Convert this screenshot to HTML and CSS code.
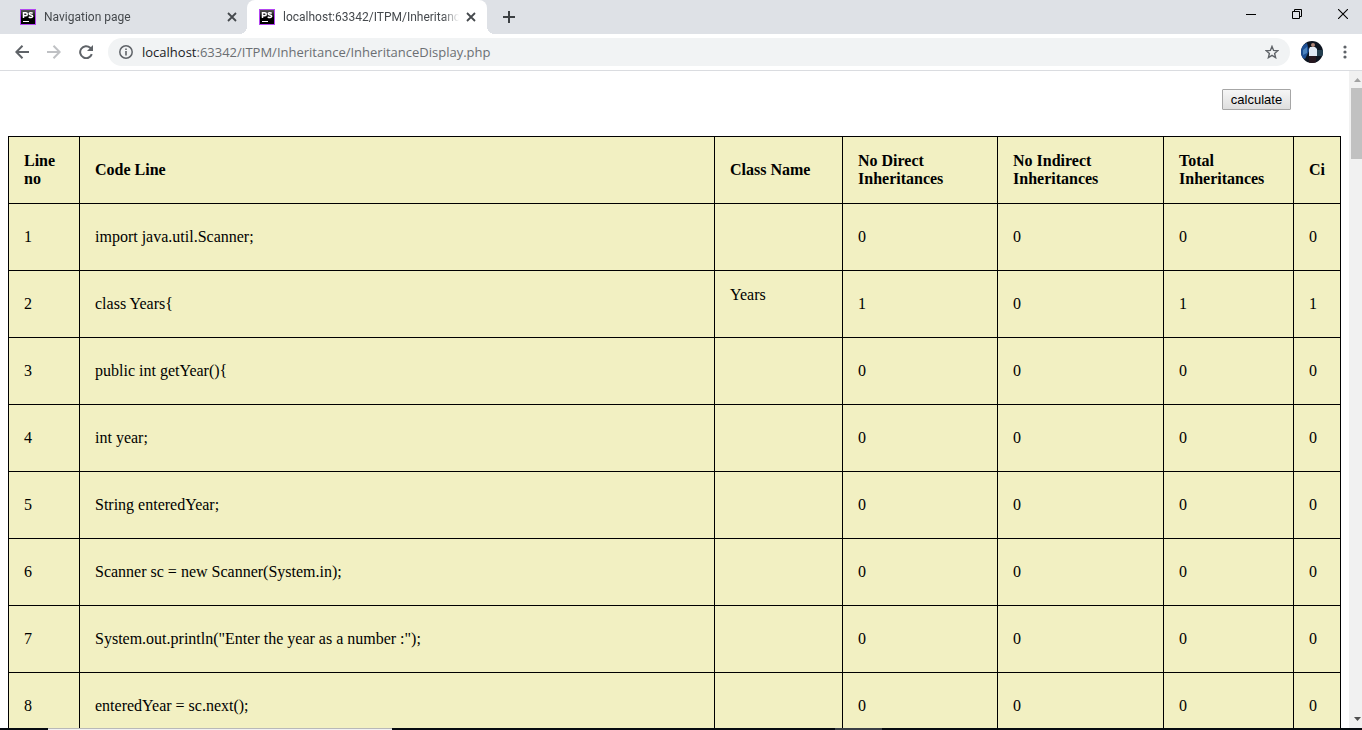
FILE: index.html
```html
<!DOCTYPE html>
<html lang="en">
<head>
<meta charset="utf-8">
<title>Inheritance Display</title>
<link rel="stylesheet" href="styles.css">
</head>
<body>
<svg class="defs" aria-hidden="true">
  <defs>
    <linearGradient id="psg" x1="0" y1="0" x2="0" y2="1"><stop offset="0" stop-color="#555"/><stop offset=".55" stop-color="#000"/></linearGradient>
    <symbol id="ps" viewBox="0 0 16 16">
      <rect width="16" height="16" fill="#b345f1"/>
      <rect x="1" y="1" width="14" height="14" fill="url(#psg)"/>
      <path d="M3.500 9V3.700h2.200a1.500 1.500 0 0 1 0 3.100H3.500M12.700 4.300C11.500 3.300 9.200 3.400 9.200 4.800c0 1.600 3.500.9 3.500 2.500 0 1.500-2.600 1.500-4 .5" fill="none" stroke="#fff" stroke-width="1.500"/>
      <path d="M3 12h6v1H3z" fill="#fff"/>
    </symbol>
    <symbol id="x" viewBox="0 0 10 10"><path d="M1 1l8 8M9 1l-8 8" stroke="#45494d" stroke-width="1.800"/></symbol>
  </defs>
</svg>
<header class="tabs">
  <div class="tab">
    <svg class="favicon"><use href="#ps"/></svg>
    <span class="tab-title">Navigation page</span>
    <button class="icon tab-close" aria-label="Close tab"><svg width="10" height="10"><use href="#x"/></svg></button>
  </div>
  <div class="tab tab-active">
    <svg class="favicon"><use href="#ps"/></svg>
    <span class="tab-title">localhost:63342/ITPM/Inheritance</span>
    <button class="icon tab-close" aria-label="Close tab"><svg width="10" height="10"><use href="#x"/></svg></button>
  </div>
  <button class="icon new-tab" aria-label="New tab"><svg width="12" height="12"><path d="M6 0v12M0 6h12" stroke="#3c4043" stroke-width="2"/></svg></button>
  <div class="window-controls">
    <button class="icon" aria-label="Minimize"><svg width="10" height="10"><path d="M0 5.500h10" stroke="#000"/></svg></button>
    <button class="icon" aria-label="Restore"><svg width="10" height="10"><path d="M.5 2.500h7v7h-7zM2.500 2.500v-2h7v7h-2" fill="none" stroke="#000"/></svg></button>
    <button class="icon" aria-label="Close"><svg width="10" height="10"><path d="M0 0l10 10M10 0L0 10" stroke="#000" stroke-width="1.100"/></svg></button>
  </div>
</header>
<nav class="toolbar">
  <button class="icon nav" aria-label="Back"><svg width="14" height="14"><path d="M14 7H1.500M7.500.8L1.300 7l6.200 6.200" fill="none" stroke="#5f6368" stroke-width="2"/></svg></button>
  <button class="icon nav" aria-label="Forward"><svg width="14" height="14"><path d="M0 7h12.500M6.500.8L12.700 7l-6.200 6.200" fill="none" stroke="#bfc1c4" stroke-width="2"/></svg></button>
  <button class="icon nav" aria-label="Reload"><svg width="14" height="14"><path d="M12.800 9.200A6 6 0 1 1 11.200 2.700L12.500 4" fill="none" stroke="#5f6368" stroke-width="2"/><path d="M14 0v6H8z" fill="#5f6368"/></svg></button>
  <div class="omnibox">
    <svg width="14" height="14"><circle cx="7" cy="7" r="6.200" fill="none" stroke="#5f6368" stroke-width="1.500"/><path d="M6.200 6h1.600v4.500H6.200zM6.200 3.400h1.600V5H6.200z" fill="#5f6368"/></svg>
    <span class="url"><span class="host">localhost</span>:63342/ITPM/Inheritance/InheritanceDisplay.php</span>
    <button class="icon" aria-label="Bookmark"><svg width="14" height="14"><path d="M7 1.400l1.600 4 4.200.3-3.200 2.700 1 4.200L7 10.300l-3.600 2.300 1-4.200L1.200 5.700l4.200-.3z" fill="none" stroke="#5f6368" stroke-width="1.400"/></svg></button>
  </div>
  <button class="icon avatar" aria-label="Profile"><svg width="22" height="22" viewBox="0 0 22 22"><clipPath id="av"><circle cx="11" cy="11" r="11"/></clipPath><g clip-path="url(#av)"><path d="M0 0h22v22H0z" fill="#0c1420"/><path d="M0 5l6-3 2 8-4 8-4-2z" fill="#1d4f94"/><path d="M2 9l4-3v6l-4 2z" fill="#4b83bd"/><path d="M15 9h7v6h-6z" fill="#233f50"/><path d="M9 6h5l2 2v7H8V8z" fill="#dfe9f4"/><circle cx="12" cy="4" r="2" fill="#ad8577"/><path d="M8 15h7v7H8z" fill="#25171f"/></g></svg></button>
  <button class="icon menu" aria-label="Menu"><svg width="4" height="14"><g fill="#5f6368"><circle cx="2" cy="2" r="1.600"/><circle cx="2" cy="7" r="1.600"/><circle cx="2" cy="12" r="1.600"/></g></svg></button>
</nav>
<div class="viewport">
  <main class="page">
    <div class="actions"><button class="calculate">calculate</button></div>
    <table class="report">
      <colgroup><col class="c-line"><col><col class="c-class"><col class="c-direct"><col class="c-indirect"><col class="c-total"><col class="c-ci"></colgroup>
      <thead><tr><th>Line no</th><th>Code Line</th><th>Class Name</th><th>No Direct Inheritances</th><th>No Indirect Inheritances</th><th>Total Inheritances</th><th>Ci</th></tr></thead>
      <tbody>
        <tr><td>1</td><td>import java.util.Scanner;</td><td></td><td>0</td><td>0</td><td>0</td><td>0</td></tr>
        <tr><td>2</td><td>class Years{</td><td>Years<br>&nbsp;</td><td>1</td><td>0</td><td>1</td><td>1</td></tr>
        <tr><td>3</td><td>public int getYear(){</td><td></td><td>0</td><td>0</td><td>0</td><td>0</td></tr>
        <tr><td>4</td><td>int year;</td><td></td><td>0</td><td>0</td><td>0</td><td>0</td></tr>
        <tr><td>5</td><td>String enteredYear;</td><td></td><td>0</td><td>0</td><td>0</td><td>0</td></tr>
        <tr><td>6</td><td>Scanner sc = new Scanner(System.in);</td><td></td><td>0</td><td>0</td><td>0</td><td>0</td></tr>
        <tr><td>7</td><td>System.out.println("Enter the year as a number :");</td><td></td><td>0</td><td>0</td><td>0</td><td>0</td></tr>
        <tr><td>8</td><td>enteredYear = sc.next();</td><td></td><td>0</td><td>0</td><td>0</td><td>0</td></tr>
      </tbody>
    </table>
  </main>
  <div class="scrollbar">
    <svg width="13" height="17"><path d="M5 11h7L8.500 7z" fill="#a3a3a3"/></svg>
    <div class="thumb"></div>
    <svg width="13" height="17"><path d="M5 6h7L8.500 10z" fill="#505050"/></svg>
  </div>
</div>
<footer class="taskbar"><div class="task-search"></div><div class="task-active"></div></footer>
</body>
</html>
```
FILE: styles.css
```css
* { box-sizing: border-box; }
body {
  margin: 0;
  height: 100vh;
  display: flex;
  flex-direction: column;
  overflow: hidden;
  background: #fff;
  font-family: "Open Sans", "Noto Sans", sans-serif;
}
svg { display: block; flex: none; }
.defs { position: absolute; width: 0; height: 0; }
.icon {
  display: flex;
  align-items: center;
  justify-content: center;
  flex: none;
  padding: 0;
  border: 0;
  background: none;
}
.tabs { display: flex; flex: none; height: 34px; padding-left: 8px; background: #dee1e6; }
.tab {
  position: relative;
  display: flex;
  align-items: center;
  width: 239px;
  padding: 0 9px 0 12px;
  color: #45494d;
  font-family: Roboto, "Open Sans", sans-serif;
  font-size: 12px;
}
.tab-active { width: 240px; padding-right: 10px; background: #fff; border-radius: 8px 8px 0 0; }
.tab-active::before,
.tab-active::after {
  content: "";
  position: absolute;
  bottom: 0;
  width: 8px;
  height: 8px;
}
.tab-active::before { right: 100%; background: radial-gradient(circle at 0 0, #dee1e6 8px, #fff 8px); }
.tab-active::after { left: 100%; background: radial-gradient(circle at 100% 0, #dee1e6 8px, #fff 8px); }
.favicon { width: 16px; height: 16px; }
.tab-title {
  flex: 1;
  min-width: 0;
  margin: 0 6px 0 8px;
  overflow: hidden;
  white-space: nowrap;
  -webkit-mask-image: linear-gradient(to left, transparent, #000 16px);
  mask-image: linear-gradient(to left, transparent, #000 16px);
}
.tab-close { width: 12px; height: 16px; }
.new-tab { width: 28px; margin-left: 8px; }
.window-controls { display: flex; margin-left: auto; padding-bottom: 6px; }
.window-controls .icon { width: 46px; }
.window-controls .icon:last-child { width: 42px; padding-left: 4px; }
.toolbar {
  display: flex;
  align-items: center;
  flex: none;
  height: 37px;
  padding-left: 6px;
  border-bottom: 1px solid #dadce0;
}
.nav { width: 32px; height: 32px; }
.omnibox {
  display: flex;
  align-items: center;
  flex: 1;
  height: 28px;
  margin-left: 6px;
  padding: 0 11px;
  border-radius: 14px;
  background: #f1f3f4;
}
.url { flex: 1; margin-left: 9px; font-size: 13px; line-height: 20px; color: #6b6f73; }
.host { color: #202124; }
.avatar { width: 22px; height: 22px; margin-left: 11px; }
.menu { width: 39px; height: 28px; padding-left: 4px; }
.viewport { display: flex; flex: 1; min-height: 0; }
.page {
  flex: 1;
  overflow: hidden;
  padding: 18px 8px 0;
  font-family: "Liberation Serif", "Times New Roman", serif;
  font-size: 16px;
  line-height: 18px;
  color: #000;
}
.actions { display: flex; justify-content: flex-end; padding-right: 50px; margin-bottom: 26px; }
.calculate {
  height: 21px;
  width: 69px;
  padding: 0;
  border: 1px solid #a6a6a6;
  border-radius: 1px;
  background: linear-gradient(#f6f6f6, #dedede);
  font: 13px "Liberation Sans", Arial, sans-serif;
  color: #000;
}
.report {
  width: 100%;
  table-layout: fixed;
  border-collapse: collapse;
  background: #f2f0c2;
}
.report th,
.report td { height: 67px; padding: 15px; border: 1px solid #000; text-align: left; }
.c-line { width: 71px; }
.c-class { width: 128px; }
.c-direct { width: 155px; }
.c-indirect { width: 166px; }
.c-total { width: 130px; }
.c-ci { width: 47px; }
.scrollbar { display: flex; flex-direction: column; flex: none; width: 13px; background: #f1f1f1; }
.thumb { height: 71px; margin: 0 0 auto 2px; background: #c1c1c1; }
.taskbar { display: flex; flex: none; height: 2px; padding-left: 48px; background: #070b10; }
.task-search { width: 344px; background: #f2f2f2; border-top: 1px solid #b8b8b8; }
.task-active { width: 47px; margin-left: 443px; background: #3b4046; }
```
